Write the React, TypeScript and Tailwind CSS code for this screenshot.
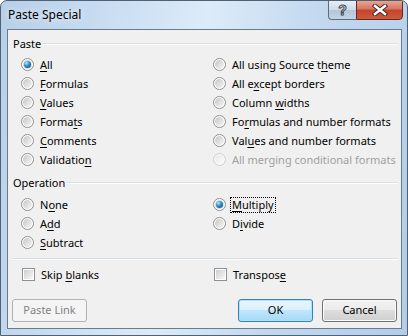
import React from "react";

type Opt = { pre: string; key?: string; post?: string; checked?: boolean; disabled?: boolean; focus?: boolean };

function Radio({ checked, disabled }: { checked?: boolean; disabled?: boolean }) {
  return (
    <span
      className={
        "w-[13px] h-[13px] shrink-0 rounded-full border flex items-center justify-center " +
        (disabled ? "border-[#cdd1d4] bg-[#f6f6f6]" : "border-[#8e8f8f] bg-white")
      }
    >
      {checked ? (
        <span className="w-[9px] h-[9px] rounded-full bg-[#d6dadd] flex items-center justify-center">
          <span className="w-[7px] h-[7px] rounded-full bg-[radial-gradient(circle_at_35%_30%,#b8e6fb_0%,#2b8ac6_45%,#0b4c7e_100%)]" />
        </span>
      ) : (
        <span
          className={
            "w-[9px] h-[9px] rounded-full bg-gradient-to-br " +
            (disabled ? "from-[#e8e9ea] to-[#fbfbfb]" : "from-[#c3c6c9] to-[#f7f7f7]")
          }
        />
      )}
    </span>
  );
}

function Check() {
  return (
    <span className="w-[13px] h-[13px] shrink-0 border border-[#8e8f8f] bg-white flex items-center justify-center">
      <span className="w-[9px] h-[9px] bg-gradient-to-br from-[#cbcfd4] to-[#f7f7f7]" />
    </span>
  );
}

function Label({ o }: { o: Opt }) {
  return (
    <span
      className={
        "px-[1px] leading-[14px] border " +
        (o.focus ? "border-dotted border-black" : "border-transparent") +
        (o.disabled ? " text-[#a0a0a0]" : " text-black")
      }
    >
      {o.pre}
      {o.key && <u className="underline-offset-[2px]">{o.key}</u>}
      {o.post}
    </span>
  );
}

function Row({ o, box }: { o: Opt; box?: boolean }) {
  return (
    <div className="h-[19px] flex items-center gap-[4px]">
      {box ? <Check /> : <Radio checked={o.checked} disabled={o.disabled} />}
      <Label o={o} />
    </div>
  );
}

function GroupHead({ title }: { title: string }) {
  return (
    <div className="h-[16px] flex items-center gap-[2px] pl-[5px]">
      <span className="text-black">{title}</span>
      <span className="flex-1 h-[2px] border-t border-[#d5dfe5] border-b-white border-b" />
    </div>
  );
}

const pasteLeft: Opt[] = [
  { pre: "", key: "A", post: "ll", checked: true },
  { pre: "", key: "F", post: "ormulas" },
  { pre: "", key: "V", post: "alues" },
  { pre: "Forma", key: "t", post: "s" },
  { pre: "", key: "C", post: "omments" },
  { pre: "Validatio", key: "n" },
];

const pasteRight: Opt[] = [
  { pre: "All using Source t", key: "h", post: "eme" },
  { pre: "All e", key: "x", post: "cept borders" },
  { pre: "Column ", key: "w", post: "idths" },
  { pre: "Fo", key: "r", post: "mulas and number formats" },
  { pre: "Val", key: "u", post: "es and number formats" },
  { pre: "All merging conditional formats", disabled: true },
];

const opLeft: Opt[] = [
  { pre: "N", key: "o", post: "ne" },
  { pre: "A", key: "d", post: "d" },
  { pre: "", key: "S", post: "ubtract" },
];

const opRight: Opt[] = [
  { pre: "", key: "M", post: "ultiply", checked: true, focus: true },
  { pre: "D", key: "i", post: "vide" },
];

function Btn({ children, primary, disabled }: { children: React.ReactNode; primary?: boolean; disabled?: boolean }) {
  return (
    <div
      className={
        "w-[75px] h-[23px] rounded-[3px] border flex items-center justify-center " +
        (disabled
          ? "border-[#adb2b5] bg-[#f4f4f4] text-[#838383]"
          : primary
          ? "border-[#3c7fb1] bg-[linear-gradient(#eaf6fd_0%,#d9f0fc_50%,#bee6fd_50%,#a7d9f5_100%)] shadow-[inset_0_0_0_1px_#a9e3f9] text-black"
          : "border-[#707070] bg-[linear-gradient(#f2f2f2_0%,#ebebeb_50%,#dddddd_50%,#cfcfcf_100%)] shadow-[inset_0_0_0_1px_#fcfcfc] text-black")
      }
    >
      {children}
    </div>
  );
}

export default function App() {
  return (
    <div className="w-[408px] h-[336px] overflow-hidden rounded-t-[7px] border border-[#4f6275] bg-[linear-gradient(100deg,#b7cfe8_0%,#cfe1f4_30%,#dcebf8_45%,#c2d8ef_70%,#b3cde9_100%)] font-['Noto_Sans','Liberation_Sans',sans-serif] text-[11px]">
      {/* Title bar */}
      <div className="h-[28px] flex items-start justify-between">
        <div className="pl-[7px] pt-[6px] text-[12px] leading-[16px] text-black [text-shadow:0_0_6px_#ffffff]">Paste Special</div>
        <div className="flex mr-[4px] -mt-px">
          <div className="w-[28px] h-[20px] rounded-bl-[4px] border border-[#5a6c80] border-r-0 bg-[linear-gradient(#e6eef7_0%,#cfdbe8_50%,#b5c6d8_50%,#c3d3e4_100%)] flex items-center justify-center">
            <span className="text-[14px] font-bold leading-none text-white [-webkit-text-stroke:1px_#3d4a57] font-['Liberation_Sans',sans-serif]">?</span>
          </div>
          <div className="w-[47px] h-[20px] rounded-br-[4px] border border-[#5e2a22] bg-[linear-gradient(#e8a493_0%,#d47561_45%,#c2432b_50%,#d1593a_100%)] flex items-center justify-center">
            <svg width="16" height="12" viewBox="0 0 16 12">
              <path d="M3 2 L13 10 M13 2 L3 10" stroke="#4a2a25" strokeWidth="4.5" strokeLinecap="square" />
              <path d="M3 2 L13 10 M13 2 L3 10" stroke="#ffffff" strokeWidth="2.5" strokeLinecap="square" />
            </svg>
          </div>
        </div>
      </div>

      {/* Client area */}
      <div className="ml-[6px] w-[395px] h-[300px] border border-[#6a7b8e] bg-[#f0f0f0] pr-[3px]">
        <div className="mt-[6px]">
          <GroupHead title="Paste" />
        </div>
        <div className="mt-[3px] flex pl-[13px]">
          <div className="w-[192px]">
            {pasteLeft.map((o, i) => (
              <Row key={i} o={o} />
            ))}
          </div>
          <div>
            {pasteRight.map((o, i) => (
              <Row key={i} o={o} />
            ))}
          </div>
        </div>

        <div className="mt-[6px]">
          <GroupHead title="Operation" />
        </div>
        <div className="mt-[4px] flex pl-[13px]">
          <div className="w-[192px]">
            {opLeft.map((o, i) => (
              <Row key={i} o={o} />
            ))}
          </div>
          <div>
            {opRight.map((o, i) => (
              <Row key={i} o={o} />
            ))}
          </div>
        </div>

        <div className="mt-[6px] ml-[5px] h-[2px] border-t border-[#d5dfe5] border-b border-b-white" />

        <div className="mt-[5px] flex pl-[14px]">
          <div className="w-[192px]">
            <Row o={{ pre: "Skip ", key: "b", post: "lanks" }} box />
          </div>
          <Row o={{ pre: "Transpos", key: "e" }} box />
        </div>

        <div className="mt-[15px] flex items-center pl-[4px] pr-[1px]">
          <Btn disabled>Paste Link</Btn>
          <div className="flex-1" />
          <div className="flex gap-[9px]">
            <Btn primary>OK</Btn>
            <Btn>Cancel</Btn>
          </div>
        </div>
      </div>
    </div>
  );
}
